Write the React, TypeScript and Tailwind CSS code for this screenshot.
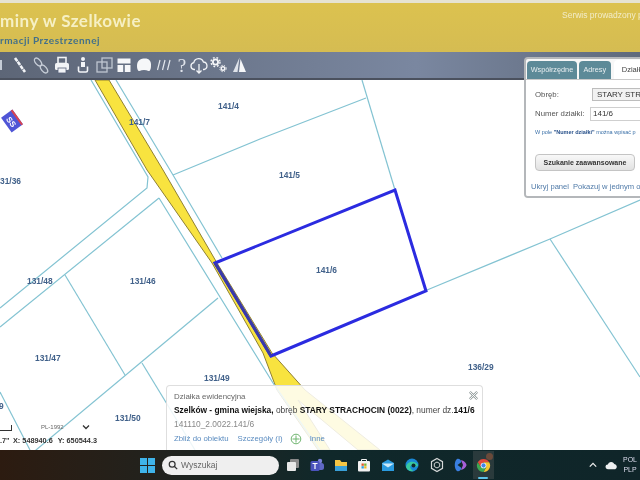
const parcelLines = [
  "91,80 148,177 147,188 0,308",
  "116,80 173,175 222,258",
  "173,175 260,139 366,98",
  "362,80 395,190",
  "159,198 0,327",
  "159,198 273,383 320,450",
  "65,275 125,375",
  "218,298 30,455",
  "142,363 195,450",
  "0,392 30,450",
  "427,290 550,239 640,200",
  "550,239 640,377",
];

const parcelLabels = [
  { text: "141/4", x: 218, y: 109 },
  { text: "141/7", x: 129, y: 125 },
  { text: "141/5", x: 279, y: 178 },
  { text: "141/6", x: 316, y: 273 },
  { text: "31/36", x: 0, y: 184 },
  { text: "131/48", x: 27, y: 284 },
  { text: "131/46", x: 130, y: 284 },
  { text: "131/47", x: 35, y: 361 },
  { text: "131/49", x: 204, y: 381 },
  { text: "131/50", x: 115, y: 421 },
  { text: "136/29", x: 468, y: 370 },
  { text: "9", x: -1, y: 409 },
];

function MapCanvas() {
  return (
    <svg viewBox="0 80 640 370" className="absolute inset-0 h-full w-full">
      <polygon
        points="95,80 147,170 212,263 263,353 277,390 318,450 330,450 298,400 358,450 380,450 305,390 272,353 217,263 163,170 109,80"
        fill="#f8e33f"
        stroke="#8f8034"
        strokeWidth="1"
      />
      {parcelLines.map((points) => (
        <polyline key={points} points={points} fill="none" stroke="#83c3d2" strokeWidth="1.2" />
      ))}
      <polygon points="215,263 395,190 426,291 271,356" fill="none" stroke="#2b2be0" strokeWidth="3" />
      <line x1="215" y1="263" x2="271" y2="356" stroke="#3a3aa8" strokeWidth="3" />
      <g transform="translate(12 121) rotate(54)">
        <rect x="-9" y="-7" width="18" height="14" fill="#4f55d6" />
        <rect x="-9" y="-7" width="18" height="2" fill="#d8434f" />
        <text x="-5" y="4" fontSize="8" fontWeight="700" fill="#fff">
          SS
        </text>
      </g>
      {parcelLabels.map((label) => (
        <text key={label.text} x={label.x} y={label.y} fontSize="8.4" fontWeight="700" fill="#41618a">
          {label.text}
        </text>
      ))}
    </svg>
  );
}

function ToolIcon({ width, children }: { width: string; children: React.ReactNode }) {
  return (
    <div className={`flex justify-center ${width}`}>
      <svg viewBox="0 0 20 20" className="h-5 w-5 shrink-0">
        {children}
      </svg>
    </div>
  );
}

function Toolbar() {
  return (
    <div className="flex h-7 items-center border-b-2 border-[#4b515e] bg-gradient-to-r from-[#5d6677] via-[#7a87a0] via-65% to-[#5f6a7c]">
      <div className="mr-[7.5px] h-[10px] w-[2px] bg-[#c5ccd6]" />
      <ToolIcon width="w-[21px]">
        <path d="M5 3 L15 17" stroke="#f2f4f7" strokeWidth="2.6" strokeDasharray="4 0.7" />
      </ToolIcon>
      <ToolIcon width="w-[21px]">
        <ellipse cx="7" cy="7" rx="2.6" ry="4.6" transform="rotate(-40 7 7)" fill="none" stroke="#c5ccd6" strokeWidth="1.4" />
        <ellipse cx="13" cy="14" rx="2.6" ry="4.6" transform="rotate(-40 13 14)" fill="none" stroke="#c5ccd6" strokeWidth="1.4" />
      </ToolIcon>
      <ToolIcon width="w-[21px]">
        <rect x="6" y="2.5" width="8" height="6" fill="none" stroke="#f2f4f7" strokeWidth="1.6" />
        <rect x="3" y="8" width="14" height="7" rx="1.5" fill="#f2f4f7" />
        <rect x="6" y="13" width="8" height="5" fill="#f2f4f7" stroke="#59637a" strokeWidth="0.8" />
      </ToolIcon>
      <ToolIcon width="w-[21px]">
        <circle cx="10" cy="4" r="2" fill="#f2f4f7" />
        <path d="M8 7 h4 v5 h-4 z" fill="#f2f4f7" />
        <path d="M5.5 11.5 v4 a1.5 1.5 0 0 0 1.5 1.5 h6 a1.5 1.5 0 0 0 1.5 -1.5 v-4" fill="none" stroke="#f2f4f7" strokeWidth="1.6" />
      </ToolIcon>
      <ToolIcon width="w-5">
        <rect x="3" y="7" width="10" height="10" fill="none" stroke="#bfc6d1" strokeWidth="1.3" />
        <rect x="8" y="3" width="10" height="10" fill="none" stroke="#bfc6d1" strokeWidth="1.3" />
      </ToolIcon>
      <ToolIcon width="w-5">
        <path d="M3.5 3.5 h13 v5 h-13 z M3.5 10 h5.7 v7 h-5.7 z M10.8 10 h5.7 v7 h-5.7 z" fill="#f6f7f9" />
      </ToolIcon>
      <ToolIcon width="w-5">
        <path d="M3 11 C3 5 7 3.5 11 3.5 C15 3.5 17.5 6 17 11 C17 14 16 16.5 14.5 16 C12 14.5 8 14.5 5.5 16 C4 16.5 3 14 3 11 Z" fill="#f6f7f9" />
      </ToolIcon>
      <ToolIcon width="w-5">
        <path d="M6 5 L3.5 15 M11 5 L8.5 15 M16 5 L13.5 15" stroke="#e3e7ed" strokeWidth="1.2" />
      </ToolIcon>
      <div className="flex w-[17px] justify-center font-['Liberation_Serif',serif] text-[19px] leading-none text-[#dfe3ea]">?</div>
      <ToolIcon width="w-[17px]">
        <path d="M6 14.5 H5 A3.5 3.5 0 0 1 4.8 7.6 A5 5 0 0 1 14.4 7 A3.8 3.8 0 0 1 15 14.5 H14" fill="none" stroke="#f2f4f7" strokeWidth="1.3" />
        <path d="M10 9 V18 M7.5 15.5 L10 18 L12.5 15.5" fill="none" stroke="#f2f4f7" strokeWidth="1.3" />
      </ToolIcon>
      <ToolIcon width="w-[21px]">
        <circle cx="7.5" cy="7" r="2.6" fill="none" stroke="#f6f7f9" strokeWidth="1.8" />
        <circle cx="7.5" cy="7" r="4.5" fill="none" stroke="#f6f7f9" strokeWidth="1.4" strokeDasharray="1.8 1.8" />
        <circle cx="15" cy="13.5" r="1.8" fill="none" stroke="#f6f7f9" strokeWidth="1.4" />
        <circle cx="15" cy="13.5" r="3.2" fill="none" stroke="#f6f7f9" strokeWidth="1" strokeDasharray="1.3 1.3" />
      </ToolIcon>
      <ToolIcon width="w-[21px]">
        <path d="M10.5 2.5 L4 17 H8.5 Z" fill="#dfe3ea" />
        <path d="M11.5 4 L17 17 H10 Z" fill="#f6f7f9" />
      </ToolIcon>
    </div>
  );
}

function SearchPanel() {
  return (
    <div className="absolute left-[524px] top-[-23px] h-[141px] w-[130px] overflow-hidden rounded-sm border-2 border-[#b4b7ba] bg-[#f7f7f7] text-[7.5px] text-[#555]">
      <div className="flex h-[20px] items-end gap-[2px] pl-[1px] pt-[1px]">
        <div className="flex h-[18px] w-[52px] items-center justify-center rounded-t-sm bg-[#5d8a98] text-[7.3px] text-[#e8eef0]">Współrzędne</div>
        <div className="flex h-[18px] w-[33px] items-center justify-center rounded-t-sm bg-[#5d8a98] text-[7.3px] text-[#e8eef0]">Adresy</div>
        <div className="ml-px flex h-[19px] w-[40px] items-center justify-center rounded-t-sm bg-white text-[7.5px] text-[#444]">Działki</div>
      </div>
      <div className="h-[119px] border-t border-[#c9c9c9] bg-white pl-[9px] pt-[8px]">
        <div className="flex h-[13px] items-center">
          <span className="w-[57px] text-[7.8px]">Obręb:</span>
          <div className="flex h-[13px] flex-1 items-center whitespace-nowrap border border-[#bdbdbd] bg-[#f2f2f2] pl-[4px] text-[8px] text-[#333]">STARY STRA</div>
        </div>
        <div className="mt-[6px] flex h-[14px] items-center">
          <span className="w-[55px] whitespace-nowrap text-[7.8px]">Numer działki:</span>
          <div className="flex h-[14px] flex-1 items-center border border-[#cfcfcf] bg-white pl-[2px] text-[8px] text-[#333]">141/6</div>
        </div>
        <p className="mt-[7px] whitespace-nowrap text-[5.5px] text-[#3a70a8]">
          W pole <b className="text-[#27508a]">"Numer działki"</b> można wpisać p
        </p>
        <button className="mt-[18px] flex h-[17px] w-[100px] items-center justify-center whitespace-nowrap rounded-sm border border-[#c4c4c4] bg-gradient-to-b from-[#f8f8f8] to-[#e2e2e2] text-[7px] font-bold text-[#333]">
          Szukanie zaawansowane
        </button>
        <div className="-ml-[4px] mt-[10px] flex gap-[4px] whitespace-nowrap text-[7.6px] text-[#4f7aa8]">
          <span>Ukryj panel</span>
          <span>Pokazuj w jednym ok</span>
        </div>
      </div>
    </div>
  );
}

function ObjectPopup() {
  return (
    <div className="absolute bottom-0 left-[166px] h-[65px] w-[317px] rounded-t-sm border border-b-0 border-[#dedede] bg-white/85 pl-[7px] pt-[5px]">
      <p className="text-[7.9px] leading-[11px] text-[#666]">Działka ewidencyjna</p>
      <p className="mt-[2px] whitespace-nowrap text-[8.4px] leading-[12px] text-[#444]">
        <b className="text-[#111]">Szelków - gmina wiejska,</b> obręb <b className="text-[#111]">STARY STRACHOCIN (0022)</b>, numer dz.<b className="text-[#111]">141/6</b>
      </p>
      <p className="mt-[2px] text-[8.4px] leading-[12px] text-[#888]">141110_2.0022.141/6</p>
      <div className="mt-[3px] flex items-center text-[7.8px] leading-[12px] text-[#5b8cc0]">
        <span>Zbliż do obiektu</span>
        <span className="ml-[9px]">Szczegóły (I)</span>
        <svg viewBox="0 0 12 12" className="ml-[7px] h-3 w-3">
          <circle cx="6" cy="6" r="4.8" fill="none" stroke="#6fb56f" strokeWidth="1" />
          <path d="M6 2.5 V9.5 M2.5 6 H9.5" stroke="#6fb56f" strokeWidth="1" />
        </svg>
        <span className="ml-[8px]">Inne</span>
      </div>
      <svg viewBox="0 0 12 12" className="absolute right-[3px] top-[4px] h-[11px] w-[11px]">
        <path d="M2 2 L10 10 M10 2 L2 10" stroke="#9aa3a3" strokeWidth="2.6" />
        <path d="M2 2 L10 10 M10 2 L2 10" stroke="#fff" strokeWidth="1" />
      </svg>
    </div>
  );
}

function Coordinates() {
  return (
    <div className="absolute bottom-[3px] left-0 text-[7.3px] leading-[12px]">
      <div className="flex items-end">
        <div className="mb-[2px] h-[6px] w-[12px] border-b border-r border-[#333]" />
        <span className="ml-[29px] text-[6px] text-[#666]">PL-1992</span>
        <svg viewBox="0 0 8 8" className="mb-[2px] ml-[18px] h-2 w-2">
          <path d="M1 2.5 L4 5.5 L7 2.5" fill="none" stroke="#333" strokeWidth="1.3" />
        </svg>
      </div>
      <div className="mt-[2px] flex gap-[5px] whitespace-nowrap font-bold text-[#333]">
        <span className="w-[8px]">.7"</span>
        <span>X: 548940.6</span>
        <span>Y: 650544.3</span>
      </div>
    </div>
  );
}

function TrayIcon({ children, className = "ml-[6px]" }: { children: React.ReactNode; className?: string }) {
  return (
    <svg viewBox="0 0 16 16" className={`h-4 w-4 shrink-0 ${className}`}>
      {children}
    </svg>
  );
}

function Taskbar() {
  return (
    <div className="flex h-[30px] items-center bg-gradient-to-r from-[#2c1b10] via-[#10282a] to-[#0f2529] pl-[140px] text-white">
      <svg viewBox="0 0 15 15" className="h-[15px] w-[15px] shrink-0">
        <path d="M0 0 H7 V7 H0 Z M8 0 H15 V7 H8 Z M0 8 H7 V15 H0 Z M8 8 H15 V15 H8 Z" fill="#3fb4ea" />
      </svg>
      <div className="ml-[7px] flex h-[19px] w-[117px] shrink-0 items-center rounded-full bg-[#efefef] pl-[6px] text-[8.5px] text-[#666]">
        <svg viewBox="0 0 12 12" className="h-[10px] w-[10px]">
          <circle cx="5" cy="5" r="3.5" fill="none" stroke="#333" strokeWidth="1.5" />
          <path d="M7.8 7.8 L11 11" stroke="#333" strokeWidth="1.5" />
        </svg>
        <span className="ml-[3px]">Wyszukaj</span>
      </div>
      <TrayIcon className="ml-[6px]">
        <rect x="5" y="2" width="9" height="9" rx="1" fill="#8a8a8a" />
        <rect x="2" y="5" width="9" height="9" rx="1" fill="#e8e8e8" />
      </TrayIcon>
      <TrayIcon className="ml-[8px]">
        <circle cx="11" cy="4" r="2.2" fill="#7b83d8" />
        <rect x="8" y="6" width="7" height="7" rx="2.5" fill="#5f68c4" />
        <rect x="1.5" y="4" width="9" height="10" rx="1.5" fill="#4b53bc" />
        <path d="M3.5 6.5 H8.5 M6 6.5 V12" stroke="#fff" strokeWidth="1.2" />
      </TrayIcon>
      <TrayIcon className="ml-[8px]">
        <path d="M2 3 H7 L8.5 5 H14 V14 H2 Z" fill="#f5c543" />
        <rect x="2" y="9" width="12" height="5" fill="#3aa0d8" />
      </TrayIcon>
      <TrayIcon className="ml-[7px]">
        <rect x="2" y="4" width="12" height="10.5" rx="1" fill="#f2f2f2" />
        <path d="M5.5 4 V2.5 H10.5 V4" fill="none" stroke="#f2f2f2" />
        <rect x="5.5" y="6.5" width="2.3" height="2.3" fill="#e2552b" />
        <rect x="8.2" y="6.5" width="2.3" height="2.3" fill="#7cb52f" />
        <rect x="5.5" y="9.2" width="2.3" height="2.3" fill="#2b9fe0" />
        <rect x="8.2" y="9.2" width="2.3" height="2.3" fill="#f4b722" />
      </TrayIcon>
      <TrayIcon className="ml-[8px]">
        <path d="M2 6 L8 2.5 L14 6 V14 H2 Z" fill="#2a9be0" />
        <path d="M2 6.5 L8 10.5 L14 6.5" fill="#cdebfa" />
      </TrayIcon>
      <TrayIcon className="ml-[8px]">
        <circle cx="8" cy="8" r="6.5" fill="#1a88d6" />
        <path d="M2 10 C3 4 11 3 14 8 C14 10 10 10 8 9 C5 8 6 13 10 14 C6 15 3 13 2 10 Z" fill="#38c8a0" />
        <circle cx="9.5" cy="8.5" r="2" fill="#10282a" />
      </TrayIcon>
      <TrayIcon className="ml-[9px]">
        <path d="M8 1.5 L13.5 4.7 V11.3 L8 14.5 L2.5 11.3 V4.7 Z" fill="none" stroke="#d5d8d8" strokeWidth="1.2" />
        <path d="M8 5 L10.7 6.5 V9.5 L8 11 L5.3 9.5 V6.5 Z" fill="none" stroke="#d5d8d8" strokeWidth="1" />
      </TrayIcon>
      <TrayIcon className="ml-[7px]">
        <path d="M5 2 C2 4 2 12 5 14 C7 15 9 13 9.5 11 L5.5 8 L9.5 5 C9 3 7 1 5 2 Z" fill="#3a7fe0" />
        <path d="M9 3 C13 4 14.5 7 14.5 8 C14.5 9 13 12 9 13 L11 8 Z" fill="#a65fd8" />
      </TrayIcon>
      <div className="relative ml-[5px] flex h-[28px] w-[21px] shrink-0 items-center justify-center bg-[#2a3a3c]">
        <svg viewBox="0 0 16 16" className="h-[15px] w-[15px]">
          <path d="M1.9 4.5 A7 7 0 0 1 14.1 4.5 H8 L5 9.5 Z" fill="#e0483a" />
          <path d="M14.1 4.5 A7 7 0 0 1 8 15 L11 9.5 L8 4.5 Z" fill="#f5c52f" />
          <path d="M1.9 4.5 A7 7 0 0 0 8 15 L11 9.5 H5 Z" fill="#3da752" />
          <circle cx="8" cy="8" r="3" fill="#fff" />
          <circle cx="8" cy="8" r="2.3" fill="#3f86e8" />
        </svg>
        <div className="absolute right-[1px] top-[2px] h-[7px] w-[7px] rounded-full bg-[#6a4a3a]" />
        <div className="absolute bottom-0 left-[5px] h-[2px] w-[10px] rounded-full bg-[#5cc4ea]" />
      </div>
      <svg viewBox="0 0 10 10" className="ml-[95px] h-2 w-2 shrink-0">
        <path d="M1 7 L5 3 L9 7" fill="none" stroke="#eee" strokeWidth="1.6" />
      </svg>
      <svg viewBox="0 0 14 10" className="ml-[8px] h-[10px] w-[13px] shrink-0">
        <path d="M3 9.5 A2.5 2.5 0 0 1 3 4.5 A3.8 3.8 0 0 1 10 3.8 A3 3 0 0 1 11 9.5 Z" fill="#eceff0" />
      </svg>
      <div className="ml-[5px] flex flex-col items-center text-[7px] leading-[10px] text-[#dde]">
        <span>POL</span>
        <span>PLP</span>
      </div>
    </div>
  );
}

export default function App() {
  return (
    <div className="flex h-[480px] w-[640px] flex-col overflow-hidden bg-white font-['Liberation_Sans',sans-serif] blur-[0.4px]">
      <div className="h-[3px] bg-[#e6e3d2]" />
      <div className="relative h-[49px] bg-gradient-to-b from-[#dcc24f] to-[#d5bc52]">
        <p className="whitespace-nowrap pt-[7px] font-['Lato',sans-serif] text-[17px] font-bold leading-[22px] tracking-[0.5px] text-[#f6f0c4]">miny w Szelkowie</p>
        <p className="mt-px whitespace-nowrap font-['Lato',sans-serif] text-[10px] font-bold leading-[14px] tracking-[0.5px] text-[#43708a]">rmacji Przestrzennej</p>
        <p className="absolute left-[562px] top-[6px] whitespace-nowrap text-[8.5px] text-[#f2ecc8]">Serwis prowadzony prz</p>
      </div>
      <Toolbar />
      <div className="relative flex-1">
        <MapCanvas />
        <SearchPanel />
        <ObjectPopup />
        <Coordinates />
      </div>
      <Taskbar />
    </div>
  );
}
